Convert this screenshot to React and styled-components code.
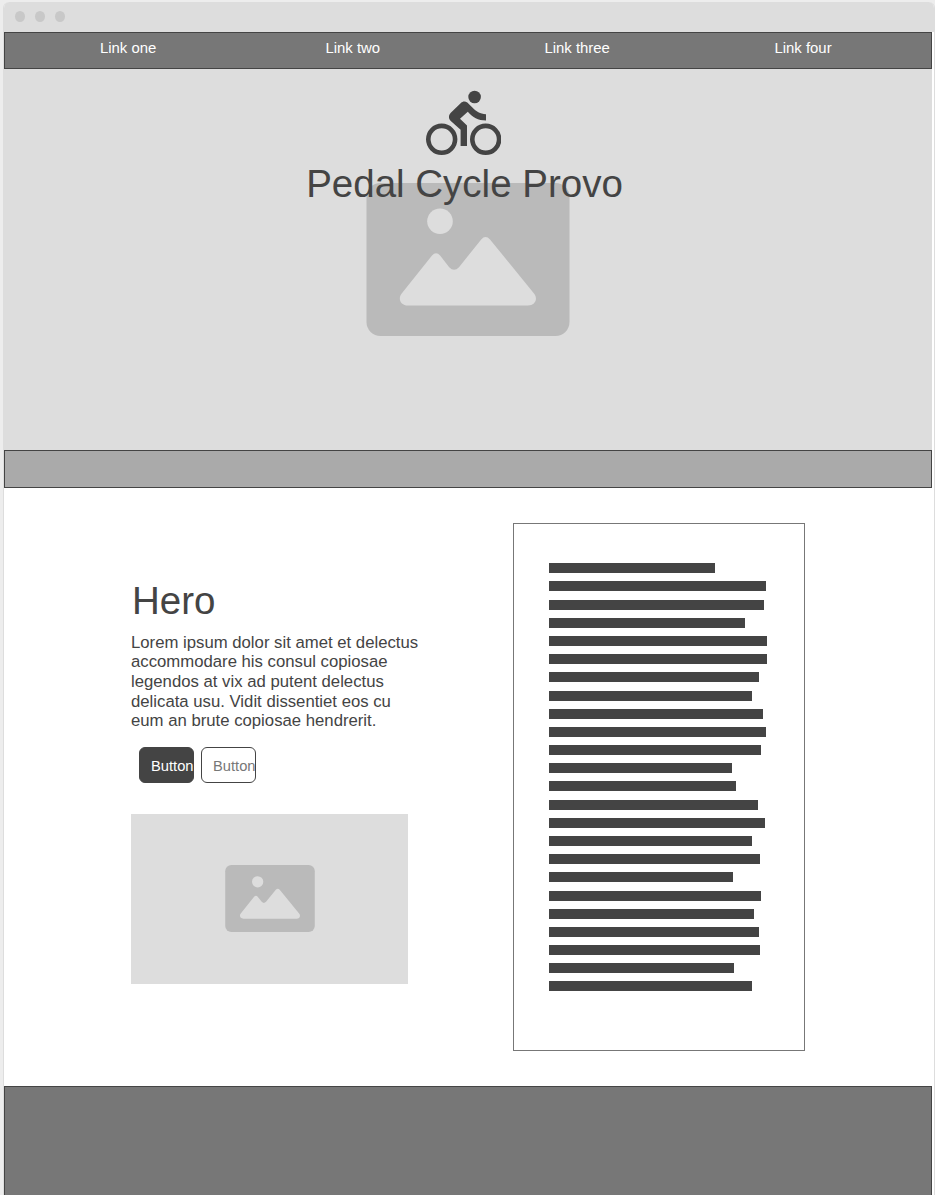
import React from "react";
import styled, { createGlobalStyle } from "styled-components";

const GlobalStyle = createGlobalStyle`
  * { box-sizing: border-box; }
  html, body { margin: 0; padding: 0; }
  body {
    background: #ededed;
    font-family: "Liberation Sans", Arial, sans-serif;
    color: #444;
    overflow: hidden;
  }
`;

const Page = styled.div`
  height: 1195px;
  padding: 2px 0 0 3px;
  overflow: hidden;
`;

const Window = styled.div`
  display: flex;
  flex-direction: column;
  height: 1220px;
  background: #fff;
  border: 1px solid #ddd;
  border-top: 0;
  border-radius: 6px 6px 0 0;
  overflow: hidden;
`;

const TitleBar = styled.div`
  display: flex;
  align-items: center;
  gap: 10px;
  flex: 0 0 30px;
  padding: 0 0 1px 11px;
  background: #ddd;
`;

const Dot = styled.span`
  width: 10px;
  height: 11px;
  border-radius: 50%;
  background: #c8c8c8;
`;

const Content = styled.div`
  display: flex;
  flex-direction: column;
  flex: 1;
  margin-right: 2px;
`;

const Nav = styled.nav`
  display: grid;
  grid-template-columns: 225.5px 219px 230px 1fr;
  flex: 0 0 37px;
  padding: 6px 0 0 95px;
  background: #777;
  border: 1px solid #444;
`;

const NavLink = styled.a`
  color: #fff;
  font-size: 14.9px;
  line-height: 18px;
`;

const Banner = styled.header`
  display: grid;
  grid-template-columns: 1fr;
  flex: 0 0 381px;
  background: #ddd;
  margin-left: -1px;
`;

const BannerLayer = styled.div`
  grid-area: 1 / 1;
  display: flex;
  flex-direction: column;
  align-items: center;
  padding-top: ${(p) => p.$top}px;
  padding-left: ${(p) => p.$left || 0}px;
  padding-right: ${(p) => p.$right || 0}px;
`;

const Title = styled.h1`
  margin: ${(p) => p.$margin || "0"};
  font-size: 38.5px;
  font-weight: 400;
  line-height: 44px;
  white-space: nowrap;
`;

const Strip = styled.div`
  flex: 0 0 38px;
  background: #aaa;
  border: 1px solid #444;
`;

const Main = styled.main`
  display: flex;
  align-items: flex-start;
  flex: 0 0 598px;
  padding: 35px 0 0 127px;
`;

const Intro = styled.section`
  width: 382px;
  padding-top: 56px;
`;

const Copy = styled.p`
  margin: 9.8px 0 0;
  font-size: 16.73px;
  line-height: 19.6px;
  white-space: nowrap;
`;

const Buttons = styled.div`
  display: flex;
  gap: 7px;
  margin: 16.2px 0 0 8px;
`;

const Button = styled.button`
  width: 55px;
  height: 36px;
  padding: 2px 0 0 11px;
  border: 1px solid #444;
  border-radius: 6px;
  background: ${(p) => (p.$primary ? "#444" : "#fff")};
  color: ${(p) => (p.$primary ? "#fff" : "#777")};
  font: 14.7px "Liberation Sans", Arial, sans-serif;
  text-align: left;
  white-space: nowrap;
`;

const Thumbnail = styled.div`
  display: flex;
  align-items: center;
  justify-content: center;
  width: 277px;
  height: 170px;
  margin-top: 31px;
  padding-bottom: 1px;
  background: #ddd;
`;

const Article = styled.section`
  display: flex;
  flex-direction: column;
  gap: 8px;
  width: 292px;
  height: 528px;
  padding: 39px 0 0 35px;
  border: 1px solid #777;
`;

const TextLine = styled.div`
  height: 10px;
  width: ${(p) => p.$width}px;
  background: #444;
  &:nth-child(11n + 3),
  &:nth-child(11n + 8) {
    margin-top: 1px;
  }
`;

const Footer = styled.footer`
  flex: 1;
  background: #777;
  border: 1px solid #444;
`;

const Picture = styled.svg`
  display: block;
`;

function Cyclist() {
  return (
    <Picture width="75" height="66" viewBox="0 0 75 66">
      <circle cx="48.6" cy="7" r="6.3" fill="#444" />
      <g fill="none" stroke="#444" strokeWidth="4.6">
        <circle cx="15.7" cy="49.3" r="13.4" />
        <circle cx="59.7" cy="49.3" r="13.4" />
      </g>
      <path
        d="M41.3 12.6C39.2 11 36.8 11.2 34.9 13L24.8 22.7C22.4 25 22.3 28.6 24.8 30.9L34.6 39.7V56H41V35.4L34 28.7L41.8 21.8C46.7 27.2 52 30.5 60 30.6V24.2C53.9 24.1 50.3 21.6 46.4 17.6Z"
        fill="#444"
      />
    </Picture>
  );
}

function ImageIcon({ width, height }) {
  return (
    <Picture width={width} height={height} viewBox="-0.5 0 204 153" preserveAspectRatio="none">
      <rect width="203" height="153" rx="14" fill="#bababa" />
      <circle cx="73.5" cy="38.3" r="12.8" fill="#ddd" />
      <path
        d="M35.2 110.5L65.5 72.5Q69.5 67.8 73.6 72.5L82.7 84.2Q87.5 89.2 92.5 84.2L114.7 56.4Q119 51.8 123.5 56.4L167.5 110.5C171.8 115.8 168.6 122.6 161.5 122.6H41.5C34.2 122.6 31 115.8 35.2 110.5Z"
        fill="#ddd"
      />
    </Picture>
  );
}

const links = ["Link one", "Link two", "Link three", "Link four"];
const lineWidths = [
  166, 217, 215, 196, 218, 218, 210, 203, 214, 217, 212, 183,
  187, 209, 216, 203, 211, 184, 212, 205, 210, 211, 185, 203,
];

export default function App() {
  return (
    <Page>
      <GlobalStyle />
      <Window>
        <TitleBar>
          <Dot />
          <Dot />
          <Dot />
        </TitleBar>
        <Content>
          <Nav>
            {links.map((label) => (
              <NavLink key={label}>{label}</NavLink>
            ))}
          </Nav>
          <Banner>
            <BannerLayer $top={114} $left={1}>
              <ImageIcon width={204} height={153} />
            </BannerLayer>
            <BannerLayer $top={21} $right={8}>
              <Cyclist />
              <Title $margin="6px 0 0 2px">Pedal Cycle Provo</Title>
            </BannerLayer>
          </Banner>
          <Strip />
          <Main>
            <Intro>
              <Title as="h2" $margin="0 0 0 1px">Hero</Title>
              <Copy>
                Lorem ipsum dolor sit amet et delectus<br />
                accommodare his consul copiosae<br />
                legendos at vix ad putent delectus<br />
                delicata usu. Vidit dissentiet eos cu<br />
                eum an brute copiosae hendrerit.
              </Copy>
              <Buttons>
                <Button $primary>Button</Button>
                <Button>Button</Button>
              </Buttons>
              <Thumbnail>
                <ImageIcon width={90} height={67} />
              </Thumbnail>
            </Intro>
            <Article>
              {lineWidths.map((width, i) => (
                <TextLine key={i} $width={width} />
              ))}
            </Article>
          </Main>
          <Footer />
        </Content>
      </Window>
    </Page>
  );
}
